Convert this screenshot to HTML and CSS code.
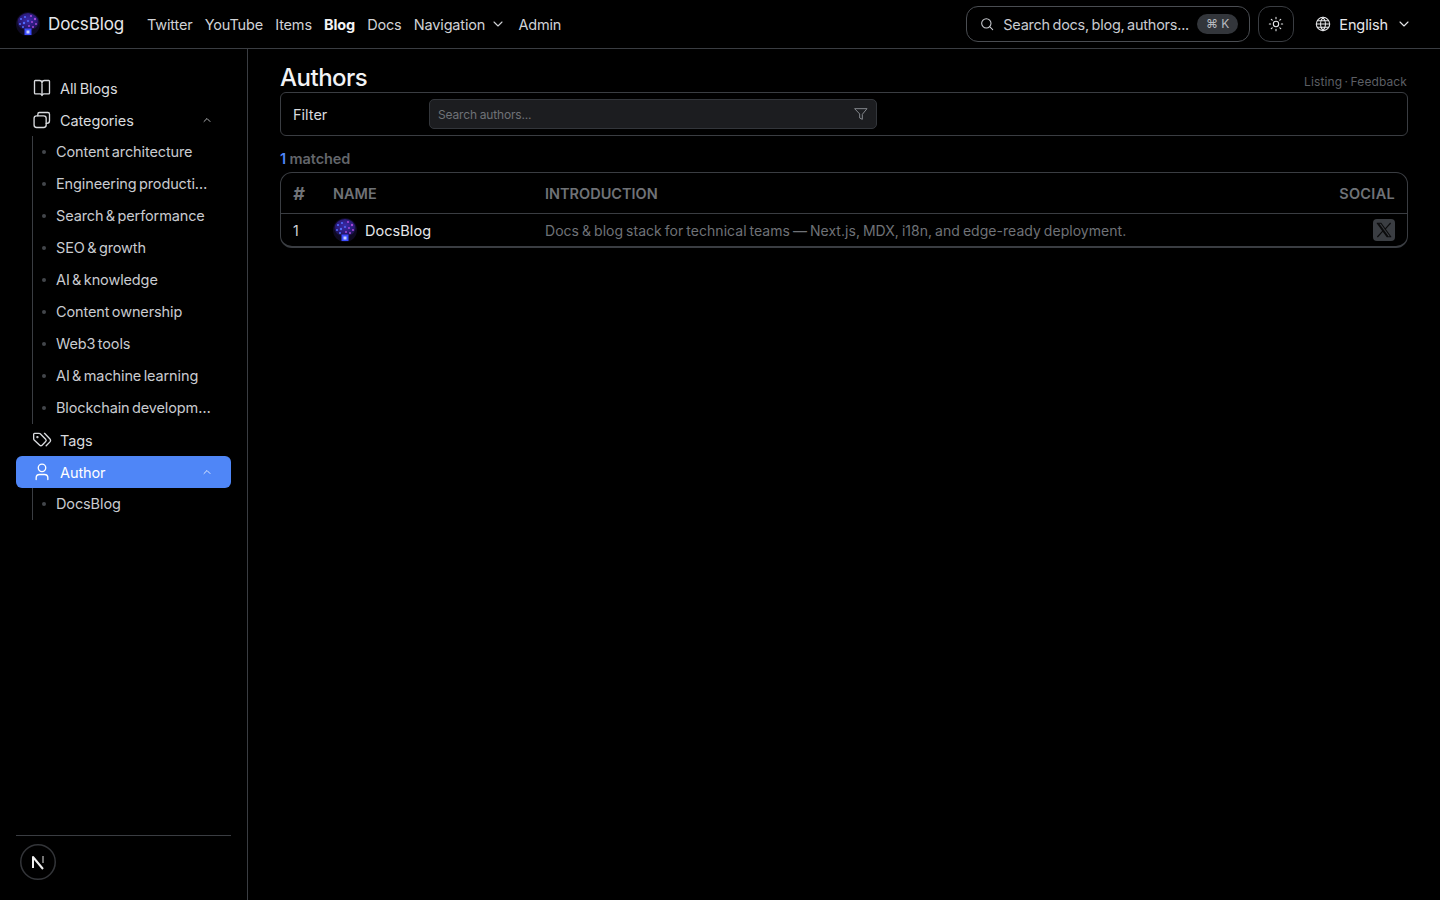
FILE: index.html
```html
<!DOCTYPE html>
<html lang="en">
<head>
<meta charset="utf-8">
<title>Authors</title>
<link rel="stylesheet" href="styles.css">
</head>
<body>
<svg class="defs" width="0" height="0" aria-hidden="true">
  <defs>
    <radialGradient id="brain" cx="50%" cy="40%" r="60%">
      <stop offset="0" stop-color="#3a2aa8"/>
      <stop offset="0.7" stop-color="#2a1a78"/>
      <stop offset="1" stop-color="#1a1048"/>
    </radialGradient>
    <symbol id="logo" viewBox="0 0 24 24">
      <circle cx="12" cy="12" r="12" fill="#0e0a22"/>
      <path d="M1.500 10a10.500 9 0 0 1 21 0c0 5-4 8-10.500 8s-10.500-3-10.500-8z" fill="url(#brain)"/>
      <g fill="#4f6cff">
        <circle cx="5" cy="7" r="1.100"/><circle cx="8" cy="11" r="1.200"/><circle cx="4" cy="12" r="1"/><circle cx="9" cy="5" r="1.100"/><circle cx="12" cy="9" r="1"/><circle cx="7" cy="15" r="1"/>
      </g>
      <g fill="#a548d8">
        <circle cx="15" cy="4" r="1.100"/><circle cx="19" cy="7" r="1.200"/><circle cx="16" cy="10" r="1"/><circle cx="20" cy="12" r="1"/><circle cx="13" cy="14" r="1"/><circle cx="17" cy="15" r="1"/>
      </g>
      <rect x="8.500" y="16.500" width="7" height="6.500" fill="#3c4cff"/>
      <rect x="10.500" y="18.500" width="3" height="3" fill="#c8d0ff"/>
    </symbol>
  </defs>
</svg>
<header class="topbar">
  <a class="brand"><svg class="brand-logo"><use href="#logo"/></svg><span>DocsBlog</span></a>
  <nav class="topnav">
    <a>Twitter</a><a>YouTube</a><a>Items</a><a class="on">Blog</a><a>Docs</a>
    <a class="has-caret">Navigation <svg class="ic16" viewBox="0 0 24 24"><path d="m6 9 6 6 6-6"/></svg></a>
    <a>Admin</a>
  </nav>
  <div class="top-right">
    <div class="search">
      <svg class="ic16" viewBox="0 0 24 24"><circle cx="11" cy="11" r="7"/><path d="m20.500 20.500-4.500-4.500"/></svg>
      <span class="search-text">Search docs, blog, authors...</span>
      <span class="kbd">⌘ K</span>
    </div>
    <button class="theme"><svg class="ic16" viewBox="0 0 24 24"><circle cx="12" cy="12" r="4"/><path d="M12 2v2M12 20v2M4.900 4.900l1.400 1.400M17.700 17.700l1.400 1.400M2 12h2M20 12h2M4.900 19.100l1.400-1.400M17.700 6.300l1.400-1.400"/></svg></button>
    <div class="lang">
      <svg class="ic16" viewBox="0 0 24 24"><circle cx="12" cy="12" r="10"/><path d="M2 12h20M12 2a15 15 0 0 1 0 20a15 15 0 0 1 0-20M4 7h16M4 17h16"/></svg>
      <span>English</span>
      <svg class="ic16" viewBox="0 0 24 24"><path d="m6 9 6 6 6-6"/></svg>
    </div>
  </div>
</header>
<div class="shell">
  <aside class="sidebar">
    <div class="side-scroll">
      <a class="item"><svg class="ic20" viewBox="0 0 24 24"><path d="M12 7v14M3 18V4a1 1 0 0 1 1-1h5a3 3 0 0 1 3 3 3 3 0 0 1 3-3h5a1 1 0 0 1 1 1v14a1 1 0 0 1-1 1h-6a3 3 0 0 0-2 2 3 3 0 0 0-2-2H4a1 1 0 0 1-1-1z"/></svg><span>All Blogs</span></a>
      <a class="item"><svg class="ic20" viewBox="0 0 24 24"><path d="M7 7V5a2 2 0 0 1 2-2h10a2 2 0 0 1 2 2v8a3 3 0 0 1-3 3h-1"/><rect x="2.500" y="7" width="14.500" height="14" rx="3"/></svg><span>Categories</span><svg class="chev" viewBox="0 0 24 24"><path d="m6 15 6-6 6 6"/></svg></a>
      <div class="subs">
        <a class="sub"><i></i><span>Content architecture</span></a>
        <a class="sub"><i></i><span>Engineering producti…</span></a>
        <a class="sub"><i></i><span>Search &amp; performance</span></a>
        <a class="sub"><i></i><span>SEO &amp; growth</span></a>
        <a class="sub"><i></i><span>AI &amp; knowledge</span></a>
        <a class="sub"><i></i><span>Content ownership</span></a>
        <a class="sub"><i></i><span>Web3 tools</span></a>
        <a class="sub"><i></i><span>AI &amp; machine learning</span></a>
        <a class="sub"><i></i><span>Blockchain developm…</span></a>
      </div>
      <a class="item"><svg class="ic20" viewBox="0 0 24 24"><path d="M2 10.500V5a1 1 0 0 1 1-1h5.500a2 2 0 0 1 1.400.6l6.500 6.500a2 2 0 0 1 0 2.800l-4.300 4.300a2 2 0 0 1-2.800 0L2.600 11.900a2 2 0 0 1-.6-1.400z"/><path d="m15 4 6.300 6.500a3 3 0 0 1 0 4.100L17 19"/><circle cx="6.500" cy="8.500" r=".6"/></svg><span>Tags</span></a>
      <a class="item active"><svg class="ic20" viewBox="0 0 24 24"><circle cx="12" cy="7" r="4.500"/><path d="M5 21v-2a4 4 0 0 1 4-4h6a4 4 0 0 1 4 4v2"/></svg><span>Author</span><svg class="chev" viewBox="0 0 24 24"><path d="m6 15 6-6 6 6"/></svg></a>
      <div class="subs">
        <a class="sub"><i></i><span>DocsBlog</span></a>
      </div>
    </div>
    <div class="side-foot">
      <span class="next"><svg viewBox="0 0 36 36" width="36" height="36"><circle cx="18" cy="18" r="17.250" class="next-ring"/><path d="M13 24V13l10 12" class="next-n"/><path d="M23 12v7" class="next-t"/></svg></span>
    </div>
  </aside>
  <main class="main">
    <div class="title-row">
      <h1>Authors</h1>
      <div class="meta">Listing · Feedback</div>
    </div>
    <div class="filter">
      <label>Filter</label>
      <div class="filter-input">
        <span>Search authors...</span>
        <svg class="ic16" viewBox="0 0 24 24"><path d="M3 4h18l-7 8.500V20l-4-2v-5.500z"/></svg>
      </div>
    </div>
    <p class="count"><b>1</b> matched</p>
    <div class="table">
      <div class="row head">
        <div class="c-num hash">#</div>
        <div class="c-name">NAME</div>
        <div class="c-intro">INTRODUCTION</div>
        <div class="c-social">SOCIAL</div>
      </div>
      <div class="row body">
        <div class="c-num">1</div>
        <div class="c-name who"><svg class="avatar"><use href="#logo"/></svg><span>DocsBlog</span></div>
        <div class="c-intro">Docs &amp; blog stack for technical teams — Next.js, MDX, i18n, and edge-ready deployment.</div>
        <div class="c-social"><span class="x"><svg viewBox="0 0 24 24" width="18" height="18"><path d="M3 3h5l13 18h-5zM20.500 3 13.500 10.800M10.300 13.500 3.500 21M5.500 4.300 16.700 19.700"/></svg></span></div>
      </div>
    </div>
  </main>
</div>
</body>
</html>
```
FILE: styles.css
```css
* { box-sizing: border-box; }
html, body { margin: 0; height: 100%; }
body {
  background: #000;
  color: #e6e7ea;
  font-family: Inter, "Noto Sans", "Liberation Sans", sans-serif;
  font-size: 14px;
  height: 900px;
  overflow: hidden;
  letter-spacing: 0;
}
a { color: inherit; text-decoration: none; }
svg { fill: none; stroke: currentColor; stroke-width: 1.6; stroke-linecap: round; stroke-linejoin: round; flex: none; }
.defs { position: absolute; }
.brand-logo, .avatar { stroke: none; }
.ic16 { width: 16px; height: 16px; }
.ic20 { width: 20px; height: 20px; }

.topbar {
  height: 49px;
  border-bottom: 1px solid #3a3d42;
  display: flex;
  align-items: center;
  padding: 0 16px;
}
.brand { display: flex; align-items: center; gap: 8px; font-size: 17px; font-weight: 400; letter-spacing: -0.12px; color: #e6e7ea; margin-right: 23px; }
.brand-logo { width: 24px; height: 24px; }
.topnav { display: flex; align-items: center; gap: 12.250px; font-size: 14.500px; letter-spacing: -0.18px; color: #d0d2d6; }
.topnav .on { font-weight: 700; color: #f2f3f5; }
.has-caret { display: flex; align-items: center; gap: 5px; }
.top-right { margin-left: auto; display: flex; align-items: center; }
.search {
  width: 284px; height: 36px;
  border: 1px solid #4a4d52; border-radius: 12px;
  display: flex; align-items: center; gap: 8px; padding: 0 12px;
  font-size: 14.500px; letter-spacing: -0.25px; word-spacing: -1.200px; color: #c9cbd0;
}
.search-text { flex: 1; white-space: nowrap; }
.kbd { background: #33363b; border-radius: 10px; padding: 0 9px; height: 20px; line-height: 20px; font-size: 12px; color: #b9bbc0; white-space: nowrap; letter-spacing: 0; word-spacing: 0; }
.theme {
  width: 36px; height: 36px; margin-left: 8px; background: none;
  border: 1px solid #3a3d42; border-radius: 12px; color: #e6e7ea;
  display: flex; align-items: center; justify-content: center; padding: 0;
}
.lang { display: flex; align-items: center; gap: 8px; margin-left: 21px; margin-right: 12px; font-size: 14.500px; letter-spacing: -0.1px; color: #e6e7ea; }

.shell { display: flex; height: 851px; }
.sidebar {
  width: 248px; border-right: 1px solid #3a3d42;
  padding: 23px 16px 0;
  display: flex; flex-direction: column;
}
.side-scroll { flex: 1; }
.item {
  height: 32px; display: flex; align-items: center; gap: 8px; padding: 0 17px 0 16px;
  border-radius: 6px; font-size: 14.500px; color: #d8dade; font-weight: 400; letter-spacing: -0.1px; word-spacing: -1px;
}
.item span { flex: 1; }
.item.active { background: #4f86f7; color: #fff; }
.chev { width: 12px; height: 12px; margin-right: 1px; }
.subs { margin-left: 16px; border-left: 1px solid #3a3d42; }
.sub {
  height: 32px; display: flex; align-items: center; padding-left: 9px; gap: 10px;
  font-size: 14.500px; letter-spacing: -0.12px; word-spacing: -1.500px; color: #c9cbd0;
}
.sub span { margin-bottom: 2px; }
.sub i { width: 4px; height: 4px; border-radius: 50%; background: #43464b; }
.side-foot { border-top: 1px solid #3a3d42; height: 65px; padding: 8px 4px; }
.next { display: block; width: 36px; height: 36px; }
.next-ring { stroke: #333539; stroke-width: 1.500; }
.next-n { stroke: #f0f0f0; stroke-width: 2; stroke-linecap: butt; }
.next-t { stroke: #999; stroke-width: 1.500; stroke-linecap: butt; }

.main { flex: 1; padding: 0 32px; }
.title-row { height: 43px; display: flex; justify-content: space-between; align-items: flex-end; }
.title-row h1 { margin: 0; font-size: 24px; font-weight: 500; color: #f2f3f5; line-height: 32px; position: relative; top: 2px; letter-spacing: -0.5px; }
.meta { font-size: 12px; letter-spacing: 0.1px; word-spacing: -1px; color: #5c5f64; padding-right: 1px; line-height: 20px; }
.filter {
  height: 44px; border: 1px solid #3a3d42; border-radius: 6px;
  display: flex; align-items: center; padding: 0 12px;
}
.filter label { width: 136px; font-size: 14.500px; color: #d8dade; }
.filter-input {
  width: 448px; height: 30px; background: #1c1d20; border: 1px solid #33363b; border-radius: 5px;
  display: flex; align-items: center; justify-content: space-between; padding: 0 7px 0 8px;
  font-size: 12px; letter-spacing: -0.15px; color: #6f7277; word-spacing: -0.5px;
}
.filter-input svg { color: #83868b; stroke-width: 1.500; }
.count { margin: 0; height: 36px; line-height: 46px; font-size: 14.500px; font-weight: 600; letter-spacing: -0.1px; color: #63666b; }
.count b { color: #4f86f7; font-weight: 600; }
.table { border: 1px solid #3a3d42; border-bottom-width: 2px; border-radius: 12px; height: 76px; }
.row { display: flex; align-items: center; padding: 0 12px; }
.row.head { height: 41px; border-bottom: 1px solid #3a3d42; color: #6f7277; font-weight: 600; font-size: 14.500px; }
.row.body { height: 32px; color: #6f7277; font-size: 14px; letter-spacing: 0.035px; word-spacing: -1px; }
.c-num { width: 40px; color: #d0d2d6; }
.hash { color: #6f7277; font-size: 18px; font-weight: 700; font-style: italic; }
.c-name { width: 212px; }
.c-intro { flex: 1; white-space: nowrap; }
.c-social { width: 100px; display: flex; justify-content: flex-end; letter-spacing: 0.3px; }
.who { display: flex; align-items: center; gap: 8px; color: #e6e7ea; font-size: 14.500px; font-weight: 400; letter-spacing: 0.05px; }
.avatar { width: 24px; height: 24px; }
.x { width: 22px; height: 22px; background: #3a3d42; border-radius: 4px; display: flex; align-items: center; justify-content: center; color: #0b0b0c; }
.x svg { stroke-width: 1.500; }
```
